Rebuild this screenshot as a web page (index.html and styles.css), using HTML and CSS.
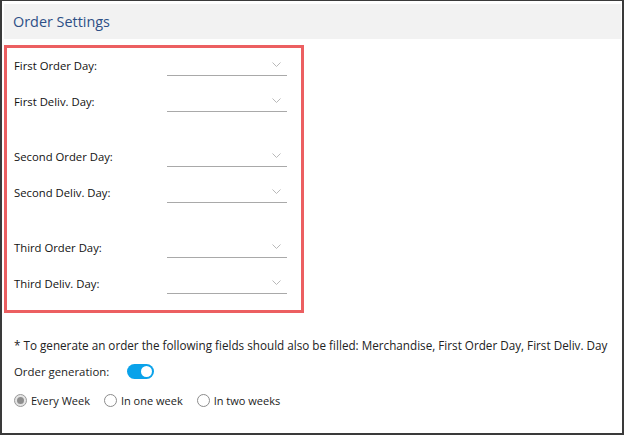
FILE: index.html
```html
<!DOCTYPE html>
<html lang="en">
<head>
  <meta charset="UTF-8" />
  <title>Order Settings</title>
  <link rel="stylesheet" href="styles.css">
</head>
<body>
  <div class="frame">
    <!-- Header -->
    <div class="panel-header">Order Settings</div>

    <!-- Order days -->
    <div class="days-box">
      <div class="day-group">
        <div class="day-row">
          <label class="day-label">First Order Day:</label>
          <div class="day-select"><svg class="chevron" width="9" height="5" viewBox="0 0 9 5"><path d="M0.5 0.5 L4.5 4.5 L8.5 0.5" /></svg></div>
        </div>
        <div class="day-row">
          <label class="day-label">First Deliv. Day:</label>
          <div class="day-select"><svg class="chevron" width="9" height="5" viewBox="0 0 9 5"><path d="M0.5 0.5 L4.5 4.5 L8.5 0.5" /></svg></div>
        </div>
      </div>
      <div class="day-group">
        <div class="day-row">
          <label class="day-label">Second Order Day:</label>
          <div class="day-select"><svg class="chevron" width="9" height="5" viewBox="0 0 9 5"><path d="M0.5 0.5 L4.5 4.5 L8.5 0.5" /></svg></div>
        </div>
        <div class="day-row">
          <label class="day-label">Second Deliv. Day:</label>
          <div class="day-select"><svg class="chevron" width="9" height="5" viewBox="0 0 9 5"><path d="M0.5 0.5 L4.5 4.5 L8.5 0.5" /></svg></div>
        </div>
      </div>
      <div class="day-group">
        <div class="day-row">
          <label class="day-label">Third Order Day:</label>
          <div class="day-select"><svg class="chevron" width="9" height="5" viewBox="0 0 9 5"><path d="M0.5 0.5 L4.5 4.5 L8.5 0.5" /></svg></div>
        </div>
        <div class="day-row">
          <label class="day-label">Third Deliv. Day:</label>
          <div class="day-select"><svg class="chevron" width="9" height="5" viewBox="0 0 9 5"><path d="M0.5 0.5 L4.5 4.5 L8.5 0.5" /></svg></div>
        </div>
      </div>
    </div>

    <div class="note">* To generate an order the following fields should also be filled: Merchandise, First Order Day, First Deliv. Day</div>

    <div class="gen-row">
      <span class="gen-label">Order generation:</span>
      <span class="toggle on"><span class="knob"></span></span>
    </div>

    <div class="radio-row">
      <label class="radio-item"><span class="radio checked"></span>Every Week</label>
      <label class="radio-item"><span class="radio"></span>In one week</label>
      <label class="radio-item"><span class="radio"></span>In two weeks</label>
    </div>
  </div>
</body>
</html>
```

FILE: styles.css
```css
body {
  margin: 0;
  font-family: 'Open Sans', 'Liberation Sans', sans-serif;
  color: #333;
  background: #fff;
}
.frame {
  width: 624px;
  height: 435px;
  box-sizing: border-box;
  border: 2px solid #3a3a3a;
  border-top-width: 1px;
  padding: 3px 1px 0 2px;
}
/* Header */
.panel-header {
  height: 35px;
  background: #f2f2f2;
  color: #2d4f86;
  font-size: 14.4px;
  line-height: 35px;
  padding-left: 9px;
}
/* Red framed day selectors */
.days-box {
  margin-top: 6px;
  width: 300px;
  height: 268px;
  box-sizing: border-box;
  border: 3px solid #ec5f61;
  padding: 6px 0 0 7px;
  display: flex;
  flex-direction: column;
  gap: 33px;
}
.day-group {
  display: flex;
  flex-direction: column;
  gap: 14px;
}
.day-row {
  display: flex;
  align-items: center;
  height: 22px;
}
.day-label {
  width: 153px;
  font-size: 11.3px;
  color: #111;
}
.day-select {
  width: 120px;
  height: 22px;
  box-sizing: border-box;
  border-bottom: 1px solid #a9a9a9;
  position: relative;
}
.chevron {
  position: absolute;
  right: 6px;
  top: 8px;
  fill: none;
  stroke: #b9b9b9;
  stroke-width: 1;
}
/* Note and generation */
.note {
  margin-top: 25px;
  padding-left: 10px;
  font-size: 11.7px;
  line-height: 15px;
  color: #222;
}
.gen-row {
  display: flex;
  align-items: center;
  padding-left: 10px;
  margin-top: 10px;
  height: 16px;
}
.gen-label {
  width: 113px;
  font-size: 11.4px;
  color: #222;
}
.toggle {
  width: 27px;
  height: 15px;
  border-radius: 8px;
  background: #d0d0d0;
  position: relative;
  display: inline-block;
}
.toggle.on {
  background: #0aa2ea;
}
.knob {
  position: absolute;
  top: 2px;
  left: 2px;
  width: 11px;
  height: 11px;
  border-radius: 50%;
  background: #fff;
}
.toggle.on .knob {
  left: 14px;
}
.radio-row {
  display: flex;
  align-items: center;
  gap: 14px;
  padding-left: 10px;
  margin-top: 14px;
  font-size: 11px;
}
.radio-item {
  display: flex;
  align-items: center;
  gap: 4px;
  color: #222;
}
.radio {
  width: 13px;
  height: 13px;
  box-sizing: border-box;
  border: 1px solid #8c8c8c;
  border-radius: 50%;
  background: #fff;
  position: relative;
}
.radio.checked {
  border-color: #9a9a9a;
  background: #e4e4e4;
}
.radio.checked::after {
  content: "";
  position: absolute;
  left: 2px;
  top: 2px;
  width: 7px;
  height: 7px;
  border-radius: 50%;
  background: #8e8e8e;
}
```
